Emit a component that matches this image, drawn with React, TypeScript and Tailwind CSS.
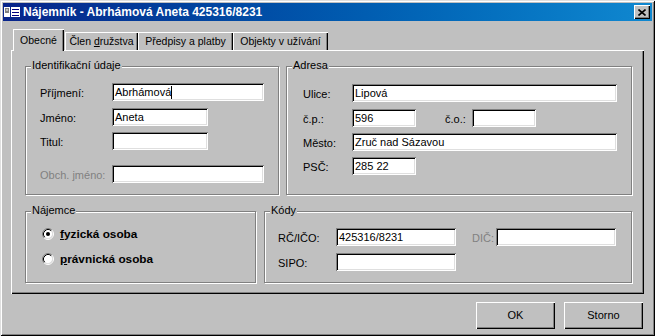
import React from "react";

const sunken =
  "bg-white shadow-[inset_1px_1px_0_#808080,inset_-1px_-1px_0_#fff,inset_2px_2px_0_#000,inset_-2px_-2px_0_#dfdfdf]";
const raised =
  "bg-[#c0c0c0] shadow-[inset_1px_1px_0_#fff,inset_-1px_-1px_0_#000,inset_-2px_-2px_0_#808080]";

function Edit({ className = "", value, caret }: { className?: string; value?: string; caret?: boolean }) {
  return (
    <div
      className={`${sunken} flex h-[18px] shrink-0 items-center pl-[3px] pt-[1px] text-[11px] leading-[13px] text-black ${className}`}
    >
      {value}
      {caret && <span className="inline-block h-[13px] w-[1px] bg-black" />}
    </div>
  );
}

function Label({ children, className = "", disabled }: { children: React.ReactNode; className?: string; disabled?: boolean }) {
  return (
    <span
      className={`mt-[2px] shrink-0 whitespace-nowrap text-[11px] leading-[13px] ${disabled ? "text-[#808080]" : "text-black"} ${className}`}
    >
      {children}
    </span>
  );
}

function Group({ title, className = "", children }: { title: string; className?: string; children?: React.ReactNode }) {
  return (
    <div className={`relative flex flex-col border border-[#808080] shadow-[1px_1px_0_#fff,inset_1px_1px_0_#fff] ${className}`}>
      <span className="absolute left-[5px] top-[-8px] bg-[#c0c0c0] px-[1px] text-[11px] leading-[13px] text-black">
        {title}
      </span>
      {children}
    </div>
  );
}

function Radio({ checked }: { checked?: boolean }) {
  return (
    <svg width="12" height="12" viewBox="0 0 12 12" className="shrink-0">
      <circle cx="6" cy="6" r="4.5" fill="#fff" />
      <path d="M2.11 9.89A5.5 5.5 0 0 1 9.89 2.11" stroke="#808080" fill="none" />
      <path d="M9.89 2.11A5.5 5.5 0 0 1 2.11 9.89" stroke="#fff" fill="none" />
      <path d="M2.82 9.18A4.5 4.5 0 0 1 9.18 2.82" stroke="#000" fill="none" />
      <path d="M9.18 2.82A4.5 4.5 0 0 1 2.82 9.18" stroke="#dfdfdf" fill="none" />
      {checked && <circle cx="6" cy="6" r="2" fill="#000" />}
    </svg>
  );
}

function TitleIcon() {
  return (
    <svg width="16" height="16" viewBox="0 0 16 16" className="shrink-0">
      <rect x="0" y="3" width="6" height="10" fill="#fff" />
      <rect x="1" y="4" width="4" height="5" fill="#808080" />
      <rect x="2" y="5" width="2" height="2" fill="#c0c0c0" />
      <rect x="7" y="3" width="9" height="10" fill="#fff" />
      <rect x="8" y="5" width="7" height="1" fill="#000080" />
      <rect x="8" y="8" width="7" height="1" fill="#000080" />
      <rect x="8" y="11" width="7" height="1" fill="#000080" />
    </svg>
  );
}

export default function App() {
  return (
    <div className="flex h-[336px] w-[655px] select-none flex-col bg-[#c0c0c0] p-[3px] font-['Liberation_Sans',Arial,sans-serif] shadow-[inset_1px_1px_0_#dfdfdf,inset_-1px_-1px_0_#000,inset_2px_2px_0_#fff,inset_-2px_-2px_0_#808080]">
      {/* title bar */}
      <div className="flex h-[18px] shrink-0 items-center bg-linear-to-r from-[#08248a] to-[#1088d0] pl-[1px] pr-[2px]">
        <TitleIcon />
        <span className="ml-[3px] whitespace-nowrap text-[12px] font-bold leading-[14px] text-white">
          Nájemník - Abrhámová Aneta 425316/8231
        </span>
        <div className={`${raised} ml-auto flex h-[14px] w-[16px] items-center justify-center`}>
          <svg width="8" height="7" viewBox="0 0 8 7">
            <path d="M0.5 0.5L7.5 6.5M7.5 0.5L0.5 6.5" stroke="#000" strokeWidth="1.6" />
          </svg>
        </div>
      </div>

      <div className="flex flex-col px-[8px] pt-[8px]">
        {/* tabs */}
        <div className="flex h-[21px] items-end pl-[2px] text-[10.5px] leading-[13px] text-black">
          <div className="relative z-10 -mb-[1px] flex h-[22px] w-[51px] items-center justify-center bg-[#c0c0c0] pt-[1px] shadow-[inset_1px_1px_0_#fff,inset_-1px_0_0_#000,inset_-2px_0_0_#808080]">
            Obecné
          </div>
          <div className="ml-[1px] flex h-[18px] w-[73px] items-center justify-center whitespace-pre shadow-[inset_1px_1px_0_#fff,inset_-1px_0_0_#000,inset_-2px_0_0_#808080]">
            Člen <u>d</u>ružstva
          </div>
          <div className="flex h-[18px] w-[95px] items-center justify-center shadow-[inset_1px_1px_0_#fff,inset_-1px_0_0_#000,inset_-2px_0_0_#808080]">
            Předpisy a platby
          </div>
          <div className="flex h-[18px] w-[95px] items-center justify-center shadow-[inset_1px_1px_0_#fff,inset_-1px_0_0_#000,inset_-2px_0_0_#808080]">
            Objekty v užívání
          </div>
        </div>

        {/* tab panel */}
        <div className={`${raised} flex h-[244px] flex-col pl-[14px] pr-[12px] pt-[16px]`}>
          <div className="flex gap-[7px]">
            <Group title="Identifikační údaje" className="h-[129px] w-[254px] pl-[14px] pt-[16px]">
              <div className="flex items-center">
                <Label className="w-[72px]">Příjmení:</Label>
                <Edit className="w-[152px]" value="Abrhámová" caret />
              </div>
              <div className="mt-[7px] flex items-center">
                <Label className="w-[72px]">Jméno:</Label>
                <Edit className="w-[96px]" value="Aneta" />
              </div>
              <div className="mt-[6px] flex items-center">
                <Label className="w-[72px]">Titul:</Label>
                <Edit className="w-[96px]" />
              </div>
              <div className="mt-[15px] flex items-center">
                <Label className="w-[72px]" disabled>
                  Obch. jméno:
                </Label>
                <Edit className="w-[152px]" />
              </div>
            </Group>

            <Group title="Adresa" className="h-[129px] w-[346px] pl-[16px] pt-[17px]">
              <div className="flex items-center">
                <Label className="w-[49px]">Ulice:</Label>
                <Edit className="w-[265px]" value="Lipová" />
              </div>
              <div className="mt-[7px] flex items-center">
                <Label className="w-[49px]">č.p.:</Label>
                <Edit className="w-[64px]" value="596" />
                <Label className="ml-[29px] w-[27px]">č.o.:</Label>
                <Edit className="w-[64px]" />
              </div>
              <div className="mt-[6px] flex items-center">
                <Label className="w-[49px]">Město:</Label>
                <Edit className="w-[265px]" value="Zruč nad Sázavou" />
              </div>
              <div className="mt-[6px] flex items-center">
                <Label className="w-[49px]">PSČ:</Label>
                <Edit className="w-[64px]" value="285 22" />
              </div>
            </Group>
          </div>

          <div className="mt-[16px] flex gap-[8px]">
            <Group title="Nájemce" className="h-[72px] w-[231px] pl-[16px] pt-[16px]">
              <div className="flex h-[12px] items-center">
                <Radio checked />
                <span className="ml-[6px] text-[11.8px] font-bold leading-[14px] text-black">
                  <u>f</u>yzická osoba
                </span>
              </div>
              <div className="mt-[13px] flex h-[12px] items-center">
                <Radio />
                <span className="ml-[6px] text-[11.8px] font-bold leading-[14px] text-black">
                  <u>p</u>rávnická osoba
                </span>
              </div>
            </Group>

            <Group title="Kódy" className="h-[72px] w-[368px] pl-[13px] pt-[16px]">
              <div className="flex items-center">
                <Label className="w-[58px]">RČ/IČO:</Label>
                <Edit className="w-[120px]" value="425316/8231" />
                <Label className="ml-[16px] w-[24px]" disabled>
                  DIČ:
                </Label>
                <Edit className="w-[120px]" />
              </div>
              <div className="mt-[7px] flex items-center">
                <Label className="w-[58px]">SIPO:</Label>
                <Edit className="w-[120px]" />
              </div>
            </Group>
          </div>
        </div>

        {/* buttons */}
        <div className="mt-[8px] flex justify-end gap-[9px] pr-[1px]">
          <div className={`${raised} flex h-[27px] w-[79px] items-center justify-center text-[11px] leading-[13px] text-black`}>
            OK
          </div>
          <div className={`${raised} flex h-[27px] w-[79px] items-center justify-center text-[11px] leading-[13px] text-black`}>
            Storno
          </div>
        </div>
      </div>
    </div>
  );
}
